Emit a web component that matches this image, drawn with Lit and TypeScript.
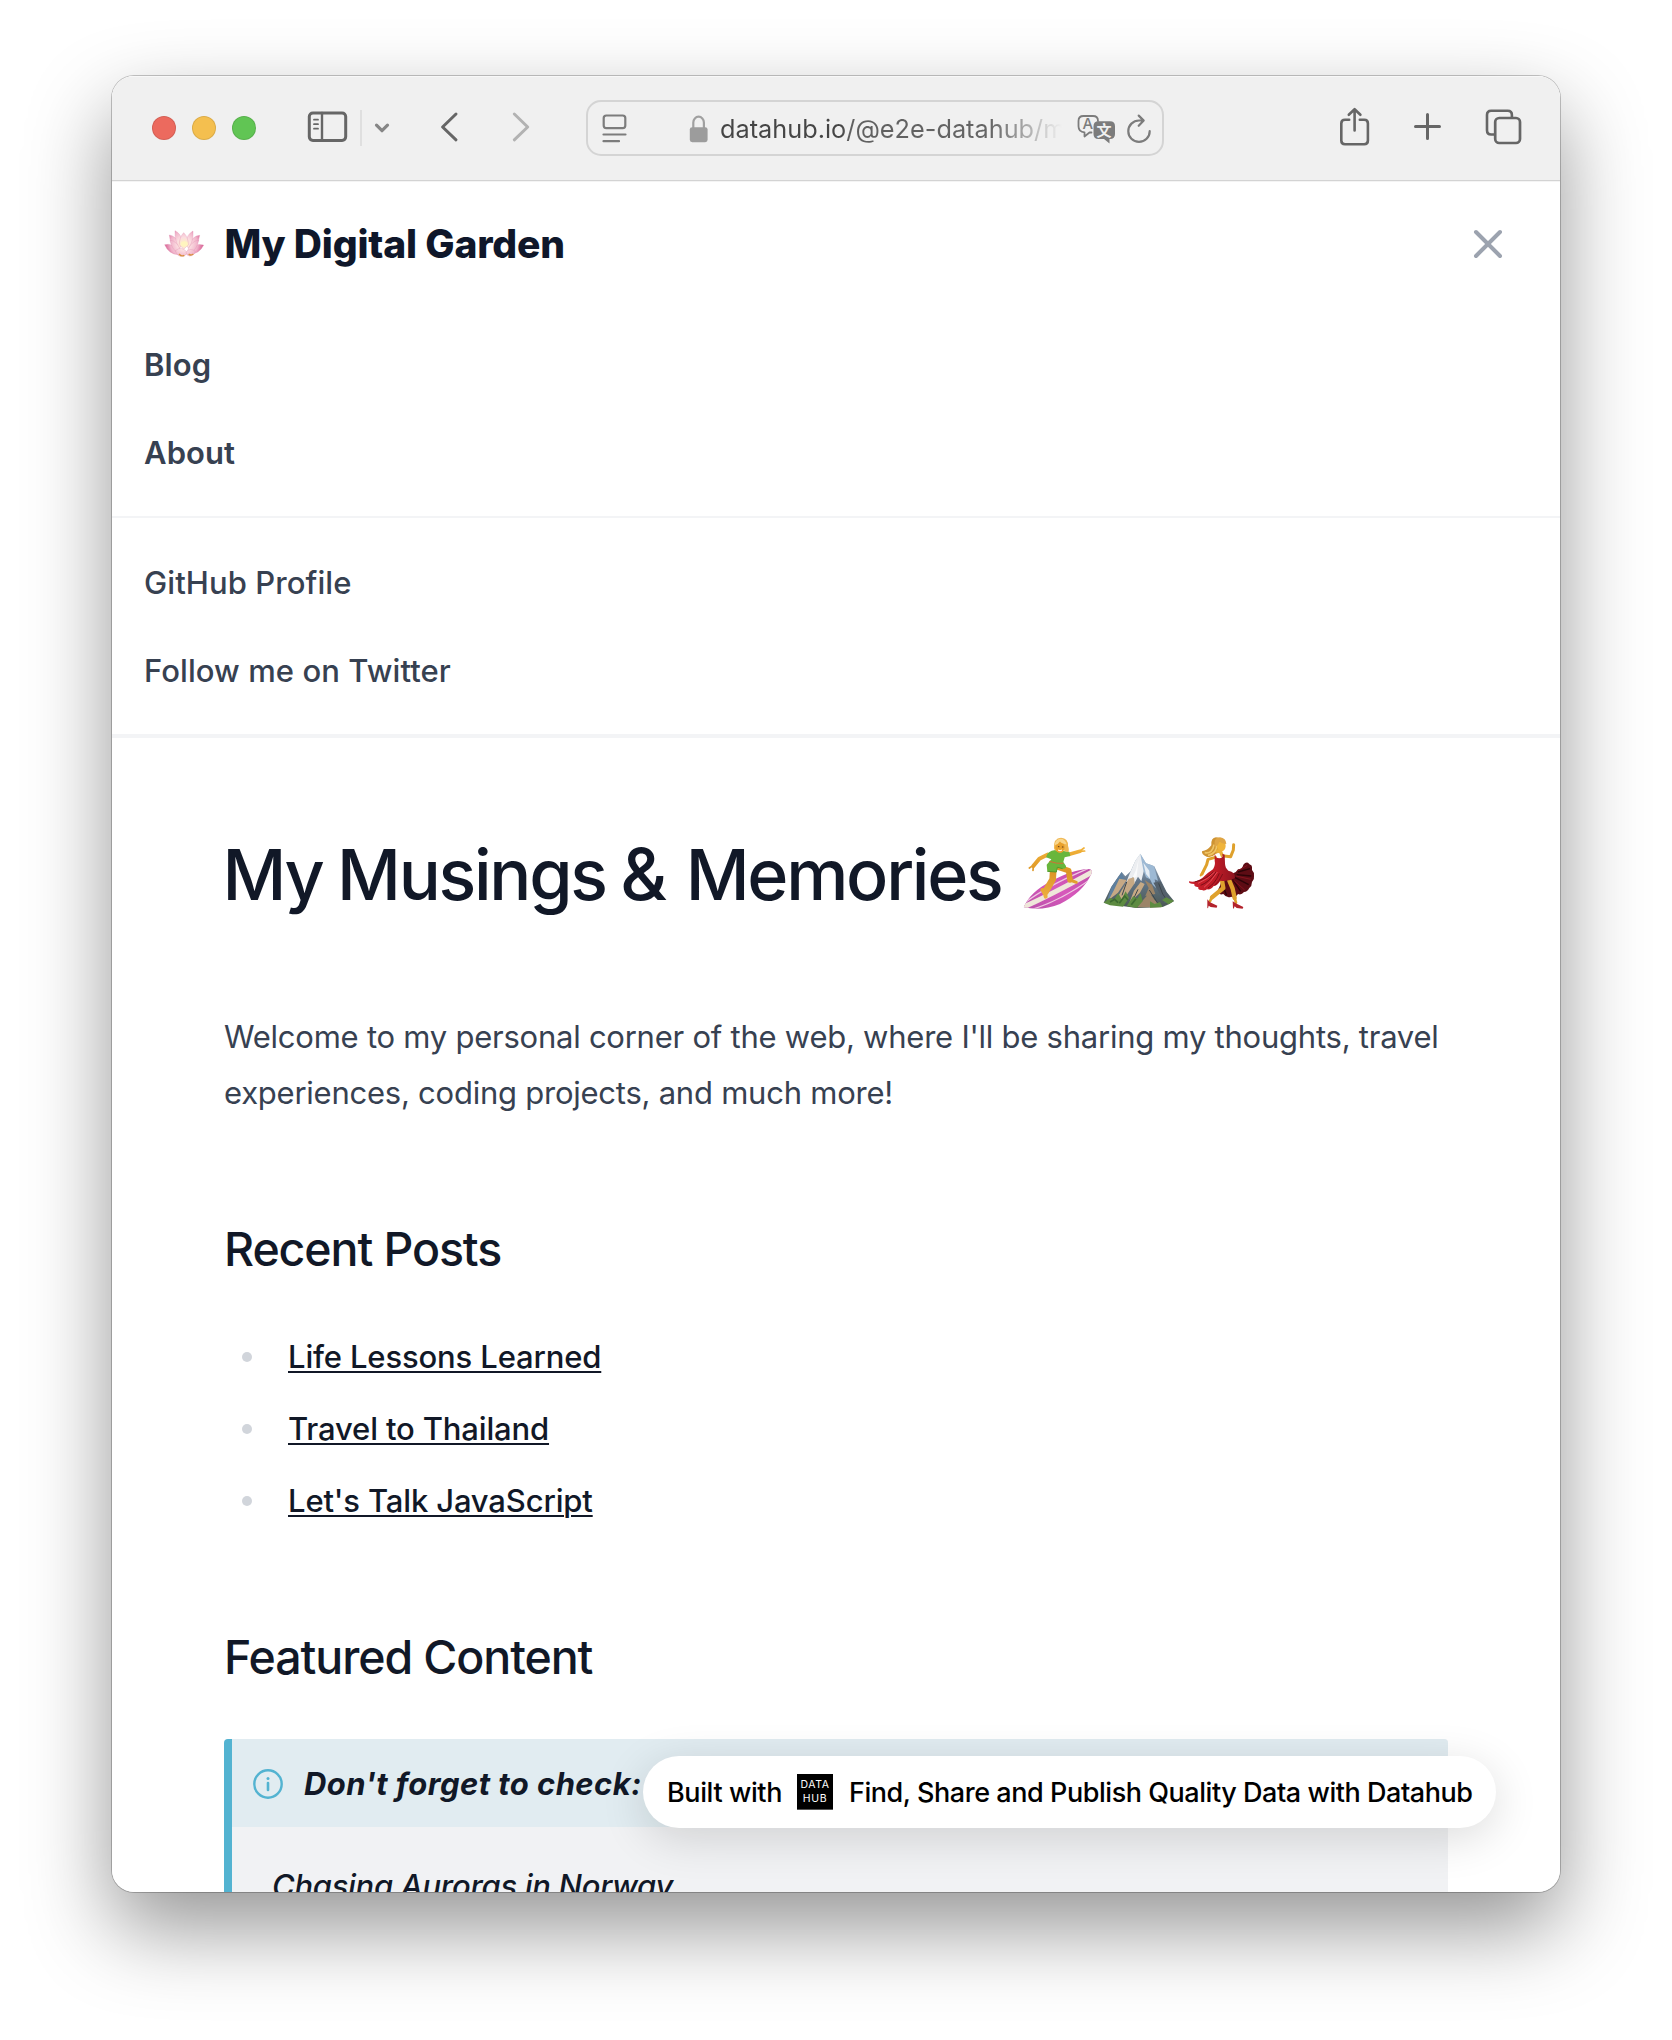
import { LitElement, html, svg, css } from "lit";
import { customElement } from "lit/decorators.js";

@customElement("browser-toolbar")
class BrowserToolbar extends LitElement {
  static styles = css`
    :host { display: block; }
    .bar {
      box-sizing: border-box; height: 106px; padding-top: 22px; display: flex; align-items: flex-start;
      background: #f0f0f0; border-bottom: 1px solid #f4f4f4; box-shadow: inset 0 -1px 0 #d3d3d3, inset 0 1px 0 #f8f8f8;
    }
    svg { display: block; fill: none; stroke: #666; stroke-width: 3; stroke-linecap: round; stroke-linejoin: round; flex: none; }
    .lights { display: flex; gap: 16px; padding: 18px 50px 0 40px; }
    .light { box-sizing: border-box; width: 24px; height: 24px; border-radius: 50%; border: 1px solid rgba(0, 0, 0, 0.1); }
    .red { background: #ec6a5e; }
    .yellow { background: #f4bf4f; }
    .green { background: #61c554; }
    .sep { width: 2px; height: 36px; margin: 12px 10px 0 10px; background: #dfdfdf; }
    .chev { stroke: #868686; stroke-width: 3.2; }
    .back { margin-left: 46px; }
    .fwd { margin-left: 50px; stroke: #b2b2b2; }
    .url {
      box-sizing: border-box; margin: 2px 172px 0 54px; width: 578px; height: 56px; flex: none;
      border: 2px solid #d4d4d4; border-radius: 15px; display: flex; align-items: center; padding-left: 13px;
    }
    .url svg { stroke-width: 2.2; stroke: #7c7c7c; }
    .lock { margin-left: 60px; }
    .addr {
      width: 345px; margin-left: 10px; padding-top: 1px; overflow: hidden; white-space: nowrap; font: 400 25.3px/52px Inter, sans-serif;
      color: transparent; background: linear-gradient(90deg, #454545 0, #454545 120px, #606060 130px, #646464 270px, #f0f0f0 342px);
      -webkit-background-clip: text; background-clip: text;
    }
    .trans { margin-left: 10px; }
    .cjk { font: 700 15px "Noto Sans CJK SC", sans-serif; fill: #f0f0f0; stroke: none; }
    .lat { font: 500 15px Inter, sans-serif; fill: #7c7c7c; stroke: none; }
    .reload { margin-left: 9px; }
    .plus { margin-left: 39px; }
    .tabs { margin-left: 41px; }
  `;
  render() {
    return html`<div class="bar">
      <div class="lights"><div class="light red"></div><div class="light yellow"></div><div class="light green"></div></div>
      <svg width="44" height="60" viewBox="306 98 44 60"><rect x="309.3" y="113" width="36.4" height="27.4" rx="3.6" /><path d="M322 113V140.400" stroke-width="2.400" /><path d="M314 119.700h4M314 124.200h4M314 128.700h4" stroke-width="1.800" /></svg>
      <div class="sep"></div>
      <svg class="chev" width="20" height="60" viewBox="372 98 20 60"><path d="M376.500 125.200l5.500 5.500 5.500-5.500" /></svg>
      <svg class="back" width="22" height="60" viewBox="438 98 22 60"><path d="M456 114L442.600 127 456 139.800" /></svg>
      <svg class="fwd" width="22" height="60" viewBox="510 98 22 60"><path d="M514.300 114L527.700 127 514.300 139.800" /></svg>
      <div class="url">
        <svg width="27" height="52" viewBox="601 102 27 52"><rect x="603.700" y="115.500" width="21.600" height="12.700" rx="2.600" /><path d="M603.500 134.500H625.500M603.500 141.200H619" /></svg>
        <svg class="lock" width="22" height="52" viewBox="688 102 22 52"><path d="M693.300 128v-5.500a5.300 5.800 0 0 1 10.600 0V128" stroke="#a0a0a0" stroke-width="2.200" /><rect x="689.800" y="127.200" width="17.800" height="15" rx="2.400" fill="#9c9c9c" stroke="none" /></svg>
        <div class="addr">datahub.io/@e2e-datahub/m</div>
        <svg class="trans" width="42" height="52" viewBox="1075 102 42 52">
          <path d="M1091.500 132.500h-2l-5 4v-4.200c-4-.3-6-2-6-6v-5.300c0-3.600 1.600-5 5-5h9.500c3.400 0 5 1.400 5 5" stroke-width="1.800" />
          <text class="lat" x="1082.400" y="129">A</text>
          <path d="M1098.500 121.200h11.500q5 0 5 5v7.800q0 5-5 5h-.5v4.500l-5.500-4.500h-5.500q-5 0-5-5v-7.800q0-5 5-5z" fill="#7c7c7c" stroke="none" />
          <text class="cjk" x="1096.600" y="135.600" >文</text>
        </svg>
        <svg class="reload" width="28" height="52" viewBox="1126 102 28 52"><path d="M1149.700 131.200a10.700 10.700 0 1 1-10.700-10.700h4.200M1138.700 115.600l5 5-5 5.200" /></svg>
      </div>
      <svg width="37" height="60" viewBox="1336 98 37 60"><path d="M1349.200 119.800h-4.200q-3.700 0-3.700 3.700v17q0 3.700 3.700 3.700h19.200q3.700 0 3.700-3.700v-17q0-3.700-3.700-3.700h-4.400" stroke-width="2.600" /><path d="M1354.600 130.500v-20.500M1348.800 114.800l5.800-5.600 5.800 5.600" stroke-width="2.600" /></svg>
      <svg class="plus" width="31" height="60" viewBox="1412 98 31 60"><path d="M1415.500 126.500h24M1427.500 114.500v24" /></svg>
      <svg class="tabs" width="42" height="60" viewBox="1484 98 42 60"><path d="M1494 134.500h-2.800q-4.200 0-4.200-4.200V115q0-4.200 4.200-4.200h16.500q4.200 0 4.200 4.200v2" stroke-width="2.600" /><rect x="1495.200" y="118" width="24.800" height="25" rx="4" stroke-width="2.700" /></svg>
    </div>`;
  }
}

const lotus = svg`
  <defs>
    <radialGradient id="lp" gradientUnits="userSpaceOnUse" cx="72" cy="72" r="58"><stop offset="0" stop-color="#fff3c0" /><stop offset=".35" stop-color="#fbdce0" /><stop offset=".7" stop-color="#f0b3ca" /><stop offset="1" stop-color="#d65e92" /></radialGradient>
  </defs>
  <g fill="url(#lp)" stroke="#e08fb0" stroke-width="1">
    <path d="M28 45q20 3 30 28l-8 14Q30 72 28 45z" /><path d="M119 46q-22 2-32 28l8 12q20-12 24-40z" />
    <path d="M45 32q20 10 22 36l-8 18Q44 66 45 32z" /><path d="M99 33q-18 10-22 34l8 18q16-20 14-52z" />
    <path d="M71 38q14 14 14 36l-14 14-13-14q0-22 13-36z" />
    <path d="M14 74q26-6 44 22l-4 8Q26 102 14 74z" /><path d="M131 75q-30-8-46 20l4 8q30-2 42-28z" />
    <path d="M30 60q24 4 32 34l-8 6Q34 86 30 60z" /><path d="M116 60q-24 4-34 34l8 6q22-12 26-40z" />
    <path d="M46 92q20-16 36 6-6 12-20 11-12-2-16-17z" /><path d="M78 96q14-14 28-2-4 14-18 14-10-2-10-12z" />
  </g>
  <ellipse cx="73" cy="72" rx="11" ry="8" fill="#fff6bd" opacity=".8" />
  <path d="M57 102q8 9 16 4M86 102q6 6 14 0" fill="none" stroke="#d9913f" stroke-width="4" />`;

const surfer = html`<svg class="emoji" width="75" height="90" viewBox="30 0 225 270">
  <defs>
    <linearGradient id="bd" x1="0" y1="1" x2="1" y2="0"><stop offset="0" stop-color="#b54fa8" /><stop offset=".5" stop-color="#d758bb" /><stop offset="1" stop-color="#b848a6" /></linearGradient>
    <linearGradient id="sk" gradientUnits="userSpaceOnUse" x1="0" y1="50" x2="0" y2="205"><stop offset="0" stop-color="#f3b43a" /><stop offset=".5" stop-color="#dc9526" /><stop offset="1" stop-color="#eeb040" /></linearGradient>
    <clipPath id="bc"><path d="M41 232Q60 186 120 155 190 118 235 117 250 118 244 132 220 186 150 222 96 244 41 232z" /></clipPath>
  </defs>
  <g clip-path="url(#bc)">
    <path d="M30 105h230v140H30z" fill="url(#bd)" />
    <path d="M38 232Q120 196 250 124" stroke="#efe6da" stroke-width="15" fill="none" />
    <path d="M42 220Q110 168 236 115M60 240Q150 214 250 142" stroke="#efc9e2" stroke-width="4" fill="none" />
  </g>
  <g fill="none" stroke="url(#sk)" stroke-linecap="round" stroke-linejoin="round">
    <path d="M112 74L88 86 70 108" stroke-width="12" /><path d="M70 106L58 114M70 108l-1 13" stroke-width="5" />
    <path d="M178 73l32-9" stroke-width="11" /><path d="M208 64l14-10M210 64l14-1" stroke-width="5" />
    <path d="M130 115L128 148 106 186" stroke-width="20" /><path d="M104 184l-7-4M104 186l3 14" stroke-width="12" />
    <path d="M146 112l30 10 4 28" stroke-width="17" /><path d="M180 150l19 7" stroke-width="9" />
  </g>
  <path d="M108 82Q112 62 136 60L178 65 181 78 164 82 160 96 168 108Q170 117 158 116L142 112 139 126 112 124 110 104 124 88z" fill="#69b63c" />
  <path d="M112 124l27 2 3-14 16 4" stroke="#4f9a2b" stroke-width="3" fill="none" />
  <path d="M118 94Q140 102 160 100" stroke="#d36e35" stroke-width="3" fill="none" />
  <path d="M132 55q-2-31 21-32 22 2 21 24 5 15 0 19-8 0-14-6l-16 4q-10 0-12-9z" fill="#efb650" />
  <ellipse cx="150" cy="52" rx="14" ry="17" fill="#e9a12c" />
  <path d="M134 46q2-20 18-20 13 0 18 17-16-1-20-9-5 10-16 12z" fill="#f9d68b" />
  <path d="M145 50h2M157 51h2" stroke="#59371b" stroke-width="3" stroke-linecap="round" /><path d="M144 60q6 5 12 0" stroke="#fff" stroke-width="3" fill="none" />
</svg>`;

const mountain = html`<svg class="emoji mountain" width="77" height="90" viewBox="270 0 231 270">
  <defs>
    <linearGradient id="mt" x1="0" y1="0" x2="0" y2="1"><stop offset="0" stop-color="#b3c6d8" /><stop offset=".5" stop-color="#63768a" /><stop offset="1" stop-color="#4a5751" /></linearGradient>
  </defs>
  <path d="M281 218L304 170 326 138 335 126 346 139 362 124 376 92 391 71 408 100 424 105 433 109 452 150 470 186 492 213 478 222 458 231 380 234 320 226z" fill="url(#mt)" />
  <path d="M304 172l31-46 8 22-22 34-30 30z" fill="#5e7f9e" />
  <path d="M391 71l-15 21-20 46-10 26 16-12 6-12 4 22 12-22 10 14 8-34 8-10z" fill="#eceef1" />
  <path d="M391 71l9 49 8 22 12 6 8 16 10 10-4-26 10 4-12-43-9-4-15-5z" fill="#9db9d4" />
  <path d="M400 98l8 34 12 14-2-24zM386 86l-8 34-12 26 14-6z" fill="#fff" opacity=".75" />
  <path d="M328 146l-16 34-16 30 28-22 26-38zM356 146l-22 36-24 42 34-20 30-44-2-18zM392 156l-20 26-14 36 32-30 14-26z" fill="#c6a985" />
  <path d="M404 150l12 24-10 24 30-6-10-28zM412 196l-32 36h74l-20-22-14-20z" fill="#9b8468" />
  <path d="M430 158l20 34 14 28 22-8-20-30-14-28z" fill="#54606b" />
  <path d="M446 160l12 32 18 26M418 180l14 22 16 26M350 156l-14 40M384 178l-18 38" stroke="#3d464c" stroke-width="3" fill="none" />
  <path d="M281 218l18-14 14 4 12-18 10 18 12-24 10 20-18 26-39-4zM350 228l20-30 12 8 10-16 6 24-18 20zM420 214l14 8 16-6 8 15-38 2zM456 210l12-8 24 11-16 10z" fill="#5d8b41" />
  <path d="M300 216l14-8 10 10M328 220l16-22 10 12M364 224l14-18" stroke="#3d6b31" stroke-width="5" fill="none" />
</svg>`;

const dancer = html`<svg class="emoji dancer" width="73" height="90" viewBox="525 0 219 270">
  <defs><linearGradient id="dr" x1="0" y1="0" x2="1" y2="0"><stop offset="0" stop-color="#c9202b" /><stop offset=".6" stop-color="#bd1a26" /><stop offset="1" stop-color="#8d1420" /></linearGradient></defs>
  <path d="M642 134Q676 134 684 118 698 116 700 104 706 96 714 98 720 104 724 106 728 112 726 120 734 128 732 138 734 148 726 156 726 168 718 174 712 186 702 186 694 196 684 192 676 206 664 200 650 206 640 192 628 196 622 186 624 178 628 172z" fill="#5d0c14" />
  <path d="M684 126l36-10M680 134l44 4M674 142l42 22M668 148l24 36M640 172l10 24" stroke="#2c0408" stroke-width="4" />
  <path d="M684 122l28-16M678 138l44 10M670 150l34 30" stroke="#9b1824" stroke-width="2" />
  <g fill="none" stroke="#dfa12c" stroke-linecap="round" stroke-linejoin="round">
    <path d="M636 150l4 24-34 28" stroke-width="13" /><path d="M606 200l-6 14" stroke-width="8" />
    <path d="M658 152l10 24 6 28" stroke-width="13" /><path d="M674 204l4 14" stroke-width="8" />
    <path d="M616 82l-22 6-4 16-14 28" stroke-width="9" /><path d="M576 130l-4 6" stroke-width="6" />
    <path d="M642 78l20 2 8-20 1-16" stroke-width="9" />
  </g>
  <path d="M592 208l8 9 22 10-2 6-18-2-6-4-2 8-2-1zM668 214l12 7 20 10-2 5-18-2-6-5-3 7-2-1z" fill="#b3232c" />
  <path d="M640 40Q634 22 618 22 602 24 604 46 592 62 576 64 574 74 590 80 606 84 616 72 630 70 632 52z" fill="#cf9433" />
  <path d="M584 68q24 4 28-24M594 76q28-6 26-34" stroke="#efc566" stroke-width="5" fill="none" />
  <ellipse cx="634" cy="48" rx="13" ry="16" fill="#f0b43a" />
  <path d="M614 50q-4-28 16-28 18 2 19 20-14 0-20-8-4 14-15 16z" fill="#dfa545" />
  <path d="M618 62l14 4 6 14" stroke="#eab03a" stroke-width="10" fill="none" />
  <path d="M614 70l4 12q12 6 20-2l-1-9 7 3 1 26q0 14 10 22 22 4 20 22-20 12-44 8-10 16-20 16-8 12-20 10-10 6-14 2-14 2-12-8-14-2-12-10-18 0-16-8 22 4 40-10 16-16 32-26 8-14 5-26z" fill="url(#dr)" />
  <path d="M618 126q-20 30-46 40M628 130q-12 30-34 44M638 132q-8 20-24 34M610 126q-18 20-56 30" stroke="#7d0e18" stroke-width="3" fill="none" />
  <path d="M622 126q-20 32-40 46M614 126q-20 22-50 34" stroke="#ee5560" stroke-width="2.500" fill="none" />
</svg>`;

@customElement("garden-page")
class GardenPage extends LitElement {
  static styles = css`
    :host { display: block; font-family: Inter, sans-serif; color: #111827; }
    svg { display: block; flex: none; }
    .head { height: 124px; display: flex; align-items: center; padding: 0 54px 0 48px; }
    .lotus { margin: 0 14px 3px 0; }
    .brand { flex: 1; padding-bottom: 2px; margin-left: 0.500px; font-size: 39px; font-weight: 800; letter-spacing: -0.180px; color: #0f172a; }
    .group { padding: 21px 32px 19px; border-bottom: 2px solid #f3f4f6; }
    .group.main { padding-top: 15px; font-weight: 600; }
    .group.links { border-bottom-width: 4px; font-weight: 500; }
    .item { height: 88px; line-height: 88px; font-size: 31px; letter-spacing: 0.080px; color: #374151; }
    .content { padding: 97px 112px 0; }
    h1, h2, p, ul { margin: 0; padding: 0; font-weight: 530; }
    h1 { display: flex; align-items: center; height: 80px; font-size: 70px; white-space: nowrap; letter-spacing: -2.250px; word-spacing: -2px; }
    .h1text { margin-left: -1.500px; width: 797.500px; padding-bottom: 2px; }
    .amp { font-size: 72px; line-height: 1; letter-spacing: 4px; }
    .mountain { margin-left: 5px; }
    .dancer { margin-left: 8px; }
    p.lead { margin-top: 94px; font-size: 31px; font-weight: 400; line-height: 56px; letter-spacing: -0.240px; color: #374151; white-space: nowrap; }
    h2 { font-size: 46.500px; line-height: 64px; letter-spacing: -1.100px; margin-top: 96px; }
    ul { list-style: none; margin-top: 47px; display: flex; flex-direction: column; gap: 16px; }
    li { display: flex; align-items: center; height: 56px; font-size: 31px; font-weight: 520; letter-spacing: -0.150px; }
    li::before { content: ""; width: 10px; height: 10px; border-radius: 50%; background: #d1d5db; margin: 2px 36px 0 18px; }
    a { color: inherit; text-decoration: underline; text-decoration-thickness: 2px; text-underline-offset: 3px; }
    h2.feat { margin-top: 97px; }
    .callout { margin-top: 50px; border-left: 8px solid #53b3d1; border-radius: 4px; background: #f1f2f4; font-style: italic; height: 240px; overflow: hidden; }
    .ctitle { display: flex; align-items: center; height: 88px; background: #e1ecf1; font-size: 31px; font-weight: 700; letter-spacing: 0.420px; padding-left: 20px; gap: 20px; }
    .cbody { padding: 31px 40px; font-size: 31px; line-height: 56px; font-weight: 500; letter-spacing: -0.300px; }
  `;
  render() {
    return html`
      <div class="head">
        <svg class="lotus" width="50" height="45" viewBox="0 0 150 135">${lotus}</svg>
        <div class="brand">My Digital Garden</div>
        <svg width="36" height="36" viewBox="0 0 36 36"><path d="M6 6l24 24M30 6L6 30" stroke="#9ca3af" stroke-width="4" stroke-linecap="round" /></svg>
      </div>
      <div class="group main"><div class="item">Blog</div><div class="item">About</div></div>
      <div class="group links"><div class="item">GitHub Profile</div><div class="item">Follow me on Twitter</div></div>
      <div class="content">
        <h1><span class="h1text">My Musings <span class="amp">&amp;</span> Memories</span>${surfer}${mountain}${dancer}</h1>
        <p class="lead">Welcome to my personal corner of the web, where I'll be sharing my thoughts, travel<br />experiences, coding projects, and much more!</p>
        <h2>Recent Posts</h2>
        <ul>${["Life Lessons Learned", "Travel to Thailand", "Let's Talk JavaScript"].map((t) => html`<li><a>${t}</a></li>`)}</ul>
        <h2 class="feat">Featured Content</h2>
        <div class="callout">
          <div class="ctitle">
            <svg width="32" height="32" viewBox="0 0 32 32" fill="none" stroke="#53b3d1" stroke-width="2.400"><circle cx="16" cy="17" r="13.700" /><path d="M16 16v7" stroke-width="2.600" stroke-linecap="round" /><circle cx="16" cy="11.500" r="1.500" fill="#53b3d1" stroke="none" /></svg>
            <span>Don't forget to check:</span>
          </div>
          <div class="cbody">Chasing Auroras in Norway</div>
        </div>
      </div>`;
  }
}

@customElement("built-with")
class BuiltWith extends LitElement {
  static styles = css`
    :host {
      box-sizing: border-box; display: flex; align-items: center; height: 72px; padding: 0 0 0 24px; border-radius: 36px; background: #fff;
      font: 500 27px/72px Inter, sans-serif; color: #000; white-space: nowrap; box-shadow: 0 10px 46px rgba(0, 0, 0, 0.14);
    }
    .by, .name { padding-top: 1px; }
    .by { width: 130px; letter-spacing: -0.400px; }
    .name { letter-spacing: -0.450px; margin-left: 16px; }
    .logo { box-sizing: border-box; width: 36px; height: 36px; padding-top: 4px; background: #000; color: #fff; border-bottom: 1px solid #555; font: 400 10.500px/14px Inter, sans-serif; letter-spacing: 0.600px; text-align: center; }
  `;
  render() {
    return html`<span class="by">Built with</span><div class="logo">DATA<br />HUB</div><span class="name">Find, Share and Publish Quality Data with Datahub</span>`;
  }
}

@customElement("app-root")
class AppRoot extends LitElement {
  static styles = css`
    :host { box-sizing: border-box; display: block; width: 1672px; height: 2040px; padding: 76px 112px 0; background: #fff; overflow: hidden; }
    .window { position: relative; height: 1816px; border-radius: 22px; box-shadow: 0 0 0 1px rgba(0, 0, 0, 0.22), 0 36px 84px rgba(0, 0, 0, 0.42); }
    .clip { height: 100%; border-radius: 22px; overflow: hidden; background: #fff; }
    .badge { position: absolute; right: 64px; bottom: 64px; width: 853px; }
  `;
  render() {
    return html`<div class="window"><div class="clip"><browser-toolbar></browser-toolbar><garden-page></garden-page></div><built-with class="badge"></built-with></div>`;
  }
}
